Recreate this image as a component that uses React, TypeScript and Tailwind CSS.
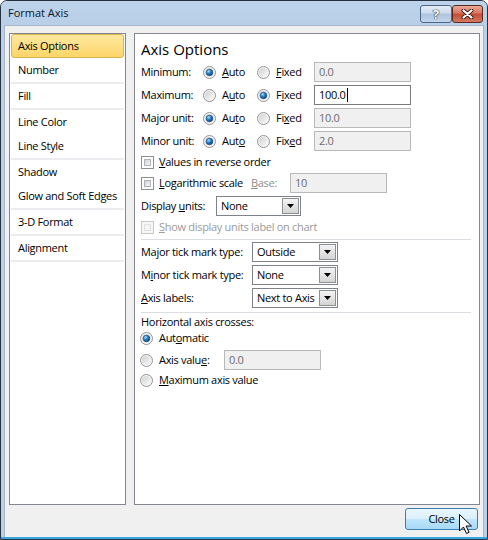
import React from "react";

const Radio = ({ on = false }: { on?: boolean }) => (
  <svg width="13" height="13" viewBox="0 0 13 13" className="shrink-0">
    <defs>
      <linearGradient id="radioFill" x1="0" y1="0" x2="1" y2="1">
        <stop offset="0" stopColor="#cfcfcf" />
        <stop offset="1" stopColor="#fbfbfb" />
      </linearGradient>
      <radialGradient id="radioDot" cx="0.35" cy="0.3" r="0.75">
        <stop offset="0" stopColor="#b4e2fc" />
        <stop offset="0.45" stopColor="#2a86cc" />
        <stop offset="1" stopColor="#0b3c78" />
      </radialGradient>
    </defs>
    <circle cx="6.5" cy="6.5" r="6" fill="#f6f6f6" stroke="#939393" />
    <circle cx="6.5" cy="6.5" r="4.6" fill="url(#radioFill)" />
    {on && (
      <circle cx="6.5" cy="6.5" r="3.3" fill="url(#radioDot)" stroke="#1a4a80" strokeWidth="0.7" />
    )}
  </svg>
);

const Check = ({ off = false }: { off?: boolean }) => (
  <span
    className={`h-[13px] w-[13px] shrink-0 border p-[2px] ${
      off ? "border-[#c8c8c8] bg-[#f6f6f6]" : "border-[#8e8f8f] bg-white"
    }`}
  >
    <span
      className={`block h-full w-full border ${
        off
          ? "border-[#e0e0e0] bg-[#f4f4f4]"
          : "border-[#aeb3b9] bg-linear-to-br from-[#cdd1d6] to-[#f7f7f7]"
      }`}
    />
  </span>
);

const Field = ({
  value,
  on = false,
  className = "",
}: {
  value: string;
  on?: boolean;
  className?: string;
}) => (
  <div
    className={`flex h-[20px] w-[97px] shrink-0 items-center border pl-[4px] ${
      on ? "border-[#7a7a7a] bg-white text-black" : "border-[#b9b9b9] bg-[#f0f0f0] text-[#6d6d6d]"
    } ${className}`}
  >
    {value}
    {on && <span className="ml-px h-[14px] w-px bg-black" />}
  </div>
);

const Combo = ({ value, className = "" }: { value: string; className?: string }) => (
  <div className={`flex h-[20px] shrink-0 items-stretch border border-[#7e838b] bg-white ${className}`}>
    <span className="flex flex-1 items-center overflow-hidden whitespace-nowrap pl-[4px]">{value}</span>
    <span className="m-px flex w-[17px] shrink-0 items-center justify-center border border-[#8e8f8f] bg-linear-to-b from-[#f4f4f4] to-[#d4d4d4]">
      <svg width="7" height="4" viewBox="0 0 7 4">
        <path d="M0 0h7L3.5 4z" fill="#000" />
      </svg>
    </span>
  </div>
);

const navGroups = [
  ["Axis Options", "Number"],
  ["Fill"],
  ["Line Color", "Line Style"],
  ["Shadow", "Glow and Soft Edges"],
  ["3-D Format"],
  ["Alignment"],
];

const unitRows = [
  { label: "Minimum:", auto: <><u>A</u>uto</>, fixed: <><u>F</u>ixed</>, value: "0.0", fixedOn: false },
  { label: "Maximum:", auto: <>A<u>u</u>to</>, fixed: <>F<u>i</u>xed</>, value: "100.0", fixedOn: true },
  { label: "Major unit:", auto: <>Au<u>t</u>o</>, fixed: <>Fi<u>x</u>ed</>, value: "10.0", fixedOn: false },
  { label: "Minor unit:", auto: <>Aut<u>o</u></>, fixed: <>Fix<u>e</u>d</>, value: "2.0", fixedOn: false },
];

export default function App() {
  return (
    <div className="relative h-[540px] w-[488px] overflow-hidden bg-white font-['Open_Sans',sans-serif] text-[11px] tracking-[-0.3px] text-black">
      <div className="flex h-full flex-col rounded-t-[7px] border border-[#26323f] bg-[#bad0e8]">
        {/* title bar */}
        <div className="flex h-[24px] shrink-0 justify-between rounded-t-[6px] bg-linear-to-b from-[#bdd3ea] to-[#b9cfe8] pl-[7px] pr-[4px]">
          <span className="mt-[3px] text-[11px] leading-[18px] tracking-normal text-[#0b1624]">Format Axis</span>
          <div className="mt-[4px] flex h-[18px]">
            <div className="flex w-[32px] items-center justify-center rounded-[3px] border border-[#4d6685] bg-[linear-gradient(#e4edf8,#cbdaec_45%,#adc3de_50%,#c3d6ec)]">
              <span className="text-[13px] font-bold leading-none text-white [text-shadow:0_0_1px_#1e3350,0_0_1px_#1e3350,0_0_1px_#1e3350]">
                ?
              </span>
            </div>
            <div className="flex w-[31px] items-center justify-center rounded-[3px] border border-[#5a2a22] bg-[linear-gradient(#eaa898,#d7765f_45%,#c64a33_50%,#d57a62)]">
              <svg width="13" height="10" viewBox="0 0 13 10">
                <path d="M2.5 1.5l8 7M10.5 1.5l-8 7" stroke="#3a1a14" strokeWidth="4" strokeLinecap="round" />
                <path d="M2.5 1.5l8 7M10.5 1.5l-8 7" stroke="#fff" strokeWidth="2.2" strokeLinecap="round" />
              </svg>
            </div>
          </div>
        </div>

        {/* client area */}
        <div className="mx-[3px] flex flex-1 flex-col border border-b-0 border-[#a6b7cb] bg-[#f0f0f0]">
          <div className="flex gap-[8px] pl-[4px] pr-[3px] pt-[7px]">
            {/* category list */}
            <div className="flex h-[472px] w-[117px] flex-col border border-[#828790] bg-white px-px">
              {navGroups.map((group, gi) => (
                <React.Fragment key={gi}>
                  {group.map((item) =>
                    item === "Axis Options" ? (
                      <div
                        key={item}
                        className="flex h-[24px] items-center rounded-[3px] border border-[#d8b54e] bg-linear-to-b from-[#fee9a0] to-[#fdd566] pl-[6px]"
                      >
                        {item}
                      </div>
                    ) : (
                      <div key={item} className="flex h-[24px] items-center whitespace-nowrap pl-[7px]">
                        {item}
                      </div>
                    )
                  )}
                  <div className="h-[2px] bg-[#ececf0]" />
                </React.Fragment>
              ))}
            </div>

            {/* options panel */}
            <div className="flex h-[472px] w-[346px] flex-col border border-[#828790] bg-white pl-[6px] pr-[8px]">
              <div className="pb-[3px] pt-[5px] text-[15px] leading-[20px] tracking-normal">Axis Options</div>

              <div className="flex flex-col gap-[3px]">
                {unitRows.map((r) => (
                  <div key={r.label} className="flex h-[20px] items-center">
                    <span className="w-[62px]">{r.label}</span>
                    <span className="flex w-[54px] items-center gap-[6px]">
                      <Radio on={!r.fixedOn} />
                      <span>{r.auto}</span>
                    </span>
                    <span className="flex w-[57px] items-center gap-[6px]">
                      <Radio on={r.fixedOn} />
                      <span>{r.fixed}</span>
                    </span>
                    <Field value={r.value} on={r.fixedOn} />
                  </div>
                ))}
              </div>

              <div className="mt-[2px] flex h-[19px] items-center gap-[5px]">
                <Check />
                <span>
                  <u>V</u>alues in reverse order
                </span>
              </div>
              <div className="mt-px flex h-[20px] items-center">
                <Check />
                <span className="ml-[5px] w-[92px] whitespace-nowrap">
                  <u>L</u>ogarithmic scale
                </span>
                <span className="w-[39px] text-[#8d8d8d]">
                  <u>B</u>ase:
                </span>
                <Field value="10" />
              </div>
              <div className="mt-[3px] flex h-[20px] items-center">
                <span className="w-[75px] whitespace-nowrap">
                  Display <u>u</u>nits:
                </span>
                <Combo value="None" className="w-[85px]" />
              </div>
              <div className="flex h-[22px] items-center gap-[5px] text-[#9a9a9a]">
                <Check off />
                <span>
                  <u>S</u>how display units label on chart
                </span>
              </div>

              <div className="mt-px h-px bg-[#dadde2]" />

              <div className="mt-[2px] flex h-[20px] items-center">
                <span className="w-[111px] whitespace-nowrap">
                  Ma<u>j</u>or tick mark type:
                </span>
                <Combo value="Outside" className="w-[86px]" />
              </div>
              <div className="mt-[3px] flex h-[20px] items-center">
                <span className="w-[111px] whitespace-nowrap">
                  M<u>i</u>nor tick mark type:
                </span>
                <Combo value="None" className="w-[86px]" />
              </div>
              <div className="mt-[3px] flex h-[20px] items-center">
                <span className="w-[111px]">
                  <u>A</u>xis labels:
                </span>
                <Combo value="Next to Axis" className="w-[86px]" />
              </div>

              <div className="mt-[4px] h-px bg-[#dadde2]" />

              <div className="flex h-[18px] items-center">Horizontal axis crosses:</div>
              <div className="-ml-px flex h-[15px] items-center gap-[6px]">
                <Radio on />
                <span>
                  Aut<u>o</u>matic
                </span>
              </div>
              <div className="-ml-px mt-[4px] flex h-[20px] items-center">
                <Radio />
                <span className="ml-[6px] w-[65px] whitespace-nowrap">
                  Axis valu<u>e</u>:
                </span>
                <Field value="0.0" />
              </div>
              <div className="-ml-px flex h-[20px] items-center gap-[6px]">
                <Radio />
                <span>
                  <u>M</u>aximum axis value
                </span>
              </div>
            </div>
          </div>

          <div className="mr-[5px] mt-[3px] flex justify-end">
            <button className="flex h-[22px] w-[73px] items-center justify-center rounded-[3px] border border-[#3c7fb1] bg-[linear-gradient(#eaf6fd,#d9f0fc_50%,#bee6fd_50%,#a7d9f5)] text-[11px]">
              Close
            </button>
          </div>
        </div>

        <div className="h-[2px] shrink-0 bg-[#37a8dd]" />
      </div>

      {/* mouse pointer over Close */}
      <svg className="absolute left-[459px] top-[514px]" width="13" height="21" viewBox="0 0 13 21">
        <path
          d="M0.5 0.5v16.5l4-4 3 6.5 2.6-1.2-3-6.3h5.4z"
          fill="#fff"
          stroke="#000"
          strokeLinejoin="round"
        />
      </svg>
    </div>
  );
}
